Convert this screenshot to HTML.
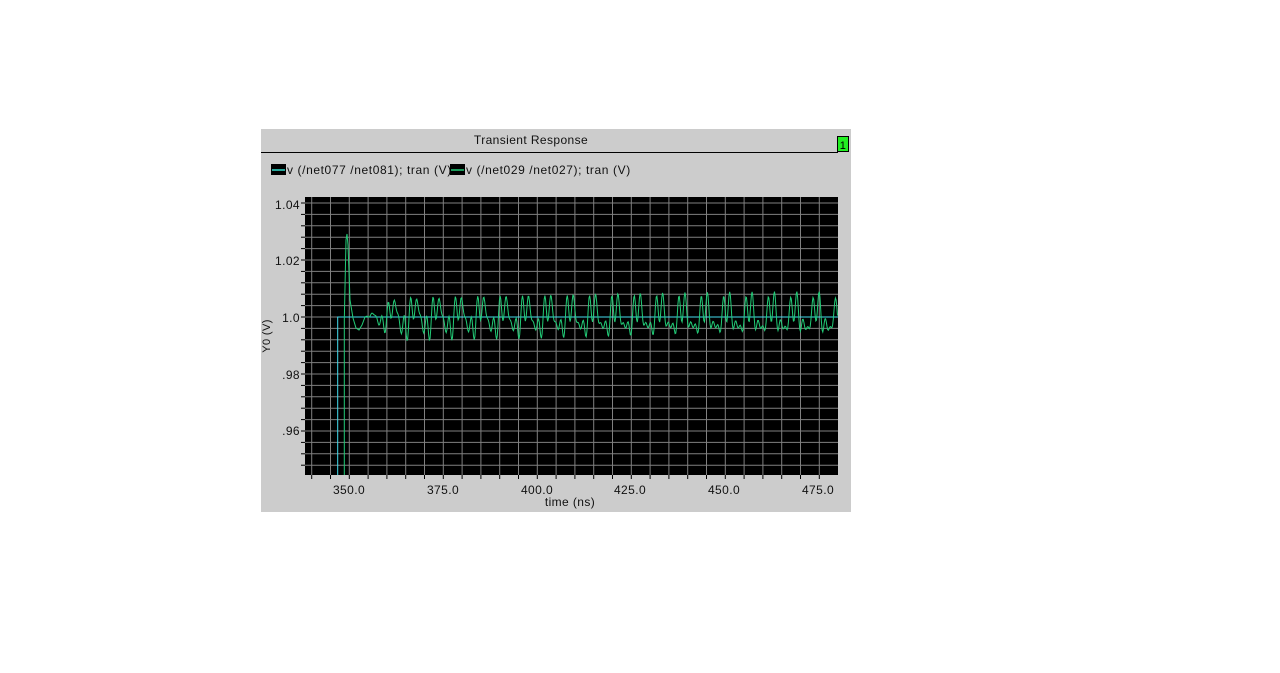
<!DOCTYPE html>
<html><head><meta charset="utf-8"><style>
html,body{margin:0;padding:0;background:#fff;width:1280px;height:673px;overflow:hidden;font-family:"Liberation Sans","DejaVu Sans",sans-serif}
text{letter-spacing:0.4px}
</style></head><body>
<svg width="1280" height="673" xmlns="http://www.w3.org/2000/svg" style="position:absolute;left:0;top:0">
<rect x="261" y="129" width="590" height="383" fill="#cccccc"/>
<text x="531" y="144" font-size="12" text-anchor="middle" fill="#111" font-family="Liberation Sans, sans-serif">Transient Response</text>
<line x1="261" y1="152.5" x2="838" y2="152.5" stroke="#000" stroke-width="1"/>
<rect x="837.5" y="136.5" width="11" height="15" fill="#22ee22" stroke="#000"/>
<text x="843" y="149" font-size="11" text-anchor="middle" fill="#000">1</text>
<text x="287" y="174" font-size="12" fill="#111" style="letter-spacing:0.6px">v (/net077  /net081); tran (V)</text>
<rect x="271" y="164" width="15" height="11" fill="#000"/>
<line x1="272" y1="170" x2="285" y2="170" stroke="#33ddcc" stroke-width="1.5"/>
<rect x="450" y="164" width="15" height="11" fill="#000"/>
<line x1="451" y1="170" x2="464" y2="170" stroke="#22cc77" stroke-width="1.5"/>
<text x="466" y="174" font-size="12" fill="#111" style="letter-spacing:0.6px">v (/net029  /net027); tran (V)</text>
<rect x="305" y="197" width="533" height="278" fill="#000"/>
<g id="grid" stroke="#808080" stroke-width="1"></g>
<g id="ticks" stroke="#000" stroke-width="1"></g>
<g font-size="12" fill="#111" text-anchor="end">
<text x="300" y="209">1.04</text><text x="300" y="265">1.02</text><text x="300" y="322">1.0</text>
<text x="300" y="379">.98</text><text x="300" y="435">.96</text></g>
<g font-size="12" fill="#111" text-anchor="middle">
<text x="349" y="494">350.0</text><text x="443" y="494">375.0</text><text x="537" y="494">400.0</text>
<text x="630" y="494">425.0</text><text x="724" y="494">450.0</text><text x="818" y="494">475.0</text>
<text x="570" y="506">time (ns)</text></g>
<text transform="translate(270,336) rotate(-90)" font-size="11" fill="#111" text-anchor="middle">Y0 (V)</text>
<path d="M337.7 475 V317 H838" stroke="#44ddee" stroke-width="1" fill="none"/>
<path id="g" stroke="#22cc77" stroke-width="1" fill="none"/>
</svg>
<script>
var ns="http://www.w3.org/2000/svg",gr=document.getElementById('grid'),tk=document.getElementById('ticks');
function L(p,x1,y1,x2,y2){var l=document.createElementNS(ns,'line');l.setAttribute('x1',x1);l.setAttribute('y1',y1);l.setAttribute('x2',x2);l.setAttribute('y2',y2);p.appendChild(l);}
for(var x=349.3-18.8*2;x<838;x+=18.8){if(x>306)L(gr,x.toFixed(1),197,x.toFixed(1),475);L(tk,x.toFixed(1),475,x.toFixed(1),479);}
for(var y=317-11.4*10;y<475;y+=11.4){if(y>197)L(gr,305,y.toFixed(1),838,y.toFixed(1));L(tk,301,y.toFixed(1),305,y.toFixed(1));}
var d="M344.3 475 V320 L346 240 L347 234 L348 245 L350 300 L353 318 L356 328 L359 330 L362 325 L365 317";
for(var x=365;x<=838;x+=0.7){var t=x-365,a=Math.min(1,t/30);
var v=a*(12*Math.sin(2*Math.PI*t/22.3)+9*Math.sin(2*Math.PI*t/7.43+0.5)+8*Math.sin(2*Math.PI*t/5.6+1));
d+=" L"+x.toFixed(1)+" "+(317-v).toFixed(1);}
document.getElementById('g').setAttribute('d',d);
</script>
</body></html>
